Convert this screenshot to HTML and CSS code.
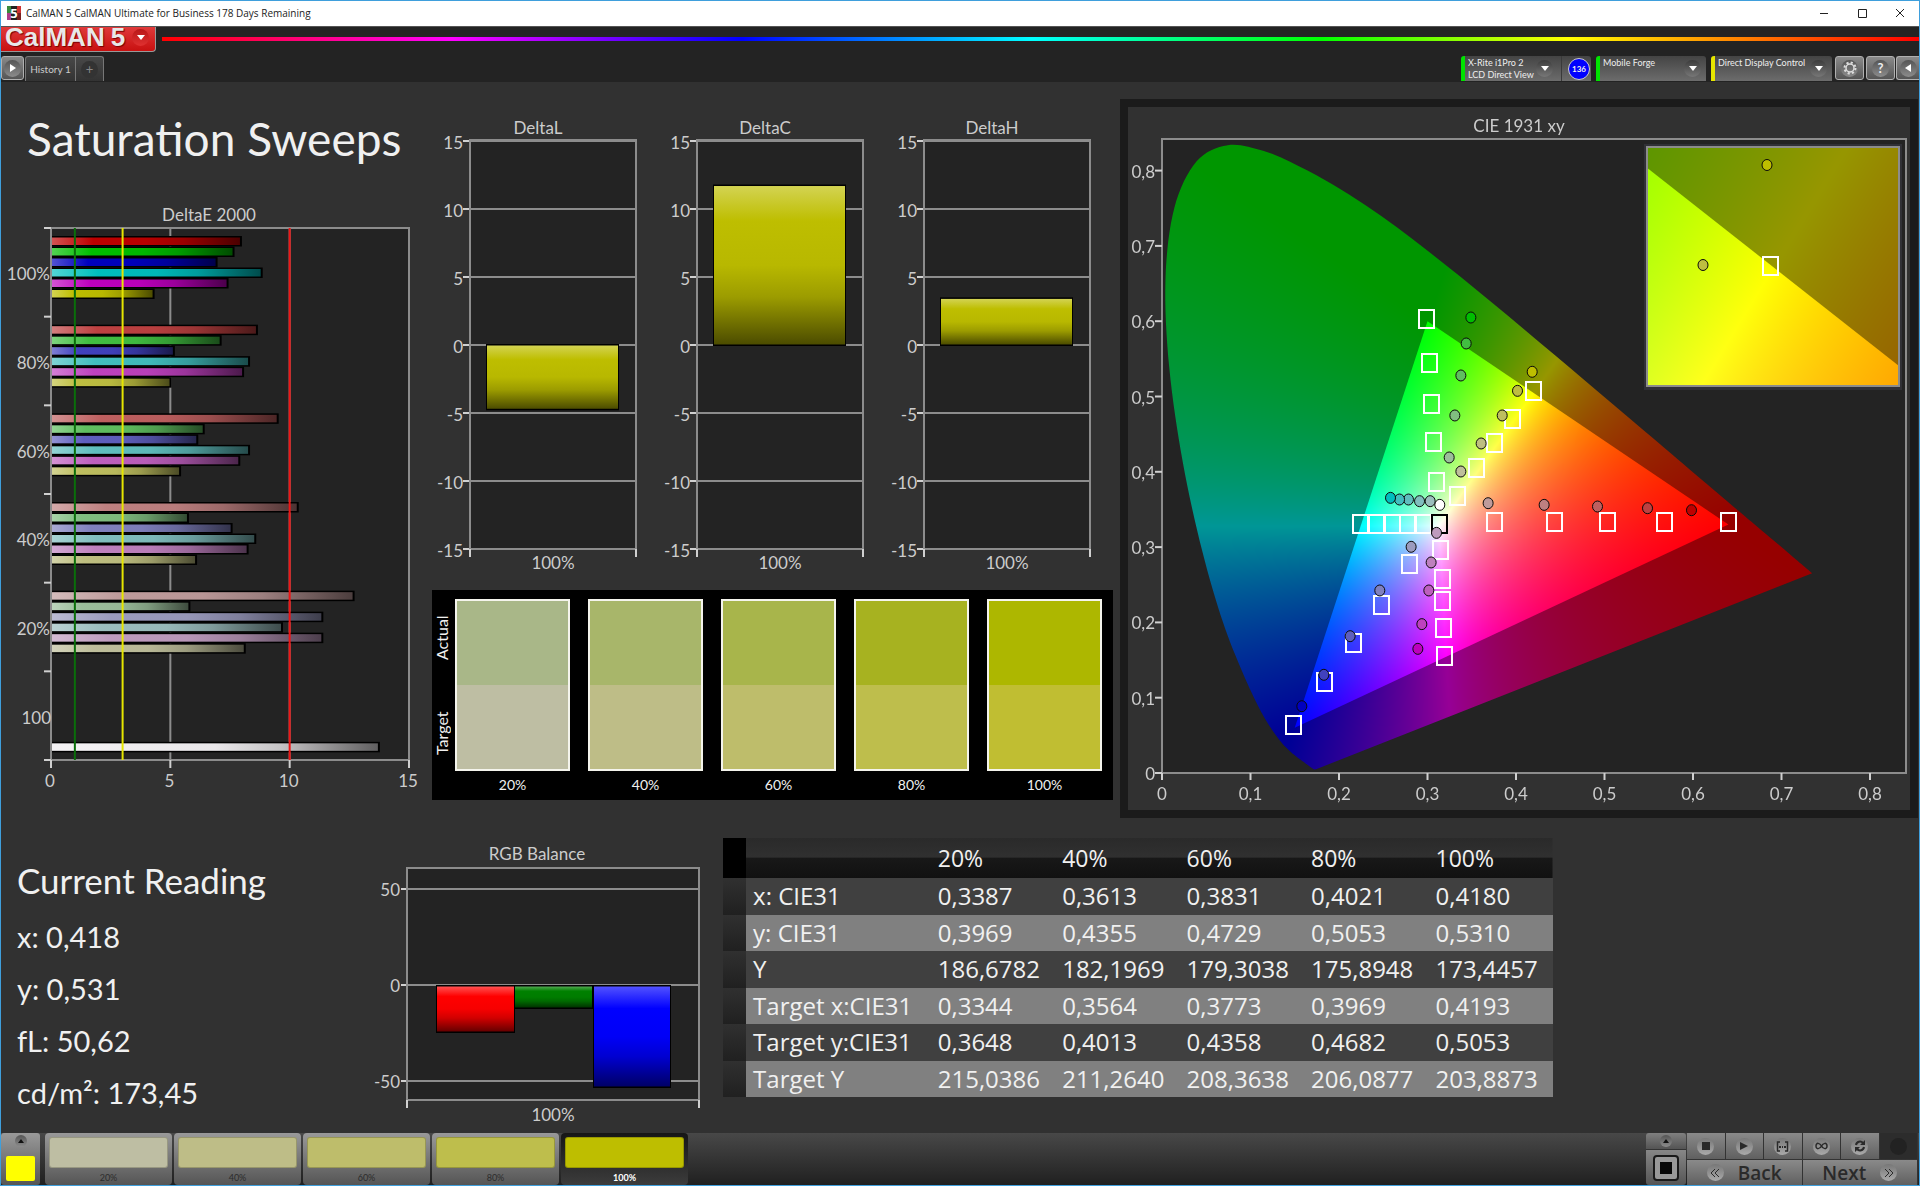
FILE: index.html
```html
<!DOCTYPE html>
<html lang="en">
<head>
    <meta charset="UTF-8">
    <meta name="viewport" content="width=device-width, initial-scale=1.0">
    <title>CalMAN 5</title>
    <link rel="stylesheet" href="styles.css">
</head>
<body>
    <div class="titlebar">
        <svg class="app-icon" width="14" height="14" viewBox="0 0 14 14">
            <rect width="14" height="14" fill="#222"/>
            <rect width="4" height="7" fill="#3a8a3a"/>
            <rect y="7" width="4" height="7" fill="#b03a8a"/>
            <rect x="10" width="4" height="7" fill="#c33"/>
            <rect x="10" y="7" width="4" height="7" fill="#7a2020"/>
            <text x="7" y="12" class="icon-five">5</text>
        </svg>
        <span class="window-title">CalMAN 5 CalMAN Ultimate for Business 178 Days Remaining</span>
        <button class="window-button" aria-label="Minimize"><svg width="10" height="10"><path d="M1 5.5h8"/></svg></button>
        <button class="window-button" aria-label="Maximize"><svg width="10" height="10"><path d="M1.5 1.5h8v8h-8z"/></svg></button>
        <button class="window-button" aria-label="Close"><svg width="10" height="10"><path d="M1 1l8 8M9 1l-8 8"/></svg></button>
    </div>

    <div class="header">
        <div class="brand">
            <button class="logo" aria-label="CalMAN menu">
                <span class="logo-name">CalMAN</span><span class="logo-name">5</span>
                <span class="round round-red"><svg width="8" height="5"><path d="M0 0h8l-4 5z" fill="#fff"/></svg></span>
            </button>
            <div class="rainbow"></div>
        </div>
        <div class="toolbar">
            <button class="tool" aria-label="Show panel"><span class="round"><svg width="6" height="8"><path d="M0 0v8l6-4z" fill="#fff"/></svg></span></button>
            <div class="tabs">
                <button class="tab">History 1</button>
                <button class="tab tab-add" aria-label="Add tab"><span class="round round-dim">+</span></button>
            </div>
            <div class="spacer"></div>
            <div class="device meter">
                <button class="device-main">
                    <span class="device-name">X-Rite i1Pro 2<br>LCD Direct View</span>
                    <span class="round round-dark"><svg width="8" height="5"><path d="M0 0h8l-4 5z" fill="#fff"/></svg></span>
                </button>
                <span class="badge">136</span>
            </div>
            <div class="device source">
                <button class="device-main">
                    <span class="device-name">Mobile Forge</span>
                    <span class="round round-dark"><svg width="8" height="5"><path d="M0 0h8l-4 5z" fill="#fff"/></svg></span>
                </button>
            </div>
            <div class="device display">
                <button class="device-main">
                    <span class="device-name">Direct Display Control</span>
                    <span class="round round-dark"><svg width="8" height="5"><path d="M0 0h8l-4 5z" fill="#fff"/></svg></span>
                </button>
            </div>
            <button class="tool tool-wide" aria-label="Settings"><span class="round"><svg width="14" height="14" viewBox="-7 -7 14 14"><circle r="5.5" fill="none" stroke="#ddd" stroke-width="2" stroke-dasharray="2.16 2.16"/><circle r="4" fill="none" stroke="#ddd" stroke-width="1.5"/></svg></span></button>
            <button class="tool tool-wide" aria-label="Help"><span class="round">?</span></button>
            <button class="tool tool-last" aria-label="Hide panel"><span class="round"><svg width="6" height="8"><path d="M6 0v8l-6-4z" fill="#fff"/></svg></span></button>
        </div>
    </div>

    <div class="main">
        <div class="top">
            <div class="sweeps">
                <h1>Saturation Sweeps</h1>
                <svg id="deltaE" viewBox="0 0 429 620"></svg>
            </div>

            <div class="middle">
                <div class="deltas">
                    <svg id="deltaL" viewBox="0 0 227 480"></svg>
                    <svg id="deltaC" viewBox="0 0 227 480"></svg>
                    <svg id="deltaH" viewBox="0 0 227 480"></svg>
                </div>
                <div class="compare">
                    <div class="compare-side"><span>Actual</span><span>Target</span></div>
                    <div class="patch"><div class="colors p20"><i></i><i></i></div>20%</div>
                    <div class="patch"><div class="colors p40"><i></i><i></i></div>40%</div>
                    <div class="patch"><div class="colors p60"><i></i><i></i></div>60%</div>
                    <div class="patch"><div class="colors p80"><i></i><i></i></div>80%</div>
                    <div class="patch"><div class="colors p100"><i></i><i></i></div>100%</div>
                </div>
            </div>

            <div class="cie">
                <svg viewBox="0 0 782 703">
                    <rect x="34" y="32" width="744" height="634" fill="#232323"/>
                    <foreignObject x="34" y="32" width="744" height="634"><canvas id="gamut" width="744" height="634"></canvas></foreignObject>
                    <rect x="516" y="37" width="258" height="246" fill="#303036"/>
                    <foreignObject x="519" y="40" width="252" height="239"><canvas id="gamutZoom" width="252" height="239"></canvas></foreignObject>
                    <g id="cieMarks"></g>
                </svg>
            </div>
        </div>

        <div class="bottom">
            <div class="reading">
                <h2>Current Reading</h2>
                <p>x: 0,418</p>
                <p>y: 0,531</p>
                <p>fL: 50,62</p>
                <p>cd/m²: 173,45</p>
            </div>
            <svg id="balance" viewBox="0 0 352 297"></svg>
            <table class="results">
                <thead>
                    <tr><td class="grip"></td><th></th><th>20%</th><th>40%</th><th>60%</th><th>80%</th><th>100%</th></tr>
                </thead>
                <tbody>
                    <tr><td class="grip"></td><th>x: CIE31</th><td>0,3387</td><td>0,3613</td><td>0,3831</td><td>0,4021</td><td>0,4180</td></tr>
                    <tr><td class="grip"></td><th>y: CIE31</th><td>0,3969</td><td>0,4355</td><td>0,4729</td><td>0,5053</td><td>0,5310</td></tr>
                    <tr><td class="grip"></td><th>Y</th><td>186,6782</td><td>182,1969</td><td>179,3038</td><td>175,8948</td><td>173,4457</td></tr>
                    <tr><td class="grip"></td><th>Target x:CIE31</th><td>0,3344</td><td>0,3564</td><td>0,3773</td><td>0,3969</td><td>0,4193</td></tr>
                    <tr><td class="grip"></td><th>Target y:CIE31</th><td>0,3648</td><td>0,4013</td><td>0,4358</td><td>0,4682</td><td>0,5053</td></tr>
                    <tr><td class="grip"></td><th>Target Y</th><td>215,0386</td><td>211,2640</td><td>208,3638</td><td>206,0877</td><td>203,8873</td></tr>
                </tbody>
            </table>
        </div>
    </div>

    <div class="footer">
        <button class="current" aria-label="Current color">
            <span class="round round-small"><svg width="6" height="4"><path d="M0 4h6l-3-4z" fill="#111"/></svg></span>
            <span class="current-color"></span>
        </button>
        <div class="levels">
            <button class="level l20"><i></i>20%</button>
            <button class="level l40"><i></i>40%</button>
            <button class="level l60"><i></i>60%</button>
            <button class="level l80"><i></i>80%</button>
            <button class="level l100 selected"><i></i>100%</button>
        </div>
        <div class="spacer"></div>
        <div class="pattern">
            <button class="pattern-up" aria-label="Patterns"><span class="round round-small"><svg width="6" height="4"><path d="M0 4h6l-3-4z" fill="#111"/></svg></span></button>
            <button class="pattern-window" aria-label="Window pattern">
                <svg width="26" height="26"><rect x="1" y="1" width="24" height="24" rx="3" fill="#999" stroke="#1a1a1a" stroke-width="2"/><rect x="7" y="7" width="12" height="12" fill="#080808"/></svg>
            </button>
        </div>
        <div class="transport">
            <button aria-label="Stop"><span class="knob"><svg width="8" height="8"><path d="M0 0h8v8h-8z"/></svg></span></button>
            <button aria-label="Play"><span class="knob"><svg width="8" height="10"><path d="M0 1v8l8-4z"/></svg></span></button>
            <button aria-label="Read series"><span class="knob"><svg width="13" height="11"><path d="M4 1H1.5v9H4M9 1h2.5v9H9" fill="none" stroke="#2a2a2a" stroke-width="1.5"/><path d="M3 5h2v2H3zM6 5h1v2H6zM8 5h2v2H8z"/></svg></span></button>
            <button aria-label="Continuous"><span class="knob"><svg width="13" height="8"><path d="M6.5 4C5 1 1 0 1 4s4 3 5.5 0S12 0 12 4s-4 3-5.5 0z" fill="none" stroke="#2a2a2a" stroke-width="1.5"/></svg></span></button>
            <button aria-label="Refresh"><span class="knob"><svg width="12" height="12"><path d="M2 5a4 4 0 0 1 7-2M10 7a4 4 0 0 1-7 2" fill="none" stroke="#2a2a2a" stroke-width="2"/><path d="M11 0v5H6zM1 12V7h5z"/></svg></span></button>
            <button class="off" aria-label="Not available" disabled><span class="knob"></span></button>
            <button class="nav"><span class="knob"><svg width="10" height="10"><path d="M5 1L1 5l4 4M9 1L5 5l4 4" fill="none" stroke="#2a2a2a"/></svg></span>Back</button>
            <button class="nav">Next<span class="knob"><svg width="10" height="10"><path d="M1 1l4 4-4 4M5 1l4 4-4 4" fill="none" stroke="#2a2a2a"/></svg></span></button>
        </div>
    </div>

    <script src="script.js"></script>
</body>
</html>
```
FILE: styles.css
```css
* {
    box-sizing: border-box;
}
body {
    display: flex;
    flex-direction: column;
    min-height: 100vh;
    margin: 0;
    border: 1px solid #3f9fdc;
    background-color: #313131;
    color: #f0f0f0;
    font-family: Lato, "Liberation Sans", sans-serif;
}
button {
    margin: 0;
    padding: 0;
    border: none;
    background: none;
    color: inherit;
    font-family: inherit;
    cursor: pointer;
}
svg {
    display: block;
}
.spacer {
    flex: 1;
}

/* window frame */
.titlebar {
    display: flex;
    align-items: center;
    height: 25px;
    padding: 0 0 1px 6px;
    background-color: #fff;
    color: #222;
    font-family: "Open Sans", sans-serif;
    font-size: 10px;
}
.window-title {
    flex: 1;
    padding-left: 5px;
}
.window-button {
    display: flex;
    justify-content: center;
    width: 38px;
}
.window-button path {
    fill: none;
    stroke: #222;
}

/* brand and toolbar */
.header {
    height: 56px;
    background-color: #232323;
    border-top: 1px solid #555;
}
.brand {
    display: flex;
    height: 25px;
}
.logo {
    display: flex;
    align-items: center;
    gap: 6px;
    width: 155px;
    padding: 0 4px 4px 4px;
    border: 1px solid #999;
    border-top: none;
    border-left: none;
    border-radius: 0 0 4px 0;
    background: linear-gradient(#e03a3a, #c81010);
}
.logo-name {
    color: #e8e8e8;
    font-family: "Liberation Sans", sans-serif;
    font-size: 26px;
    line-height: 20px;
    font-weight: bold;
    text-shadow: 1px 1px 1px #700;
}
.rainbow {
    flex: 1;
    height: 4px;
    margin: 10px 0 0 6px;
    background: linear-gradient(to right, red, magenta, blue, cyan, lime 66%, yellow 80%, red);
}
.toolbar {
    display: flex;
    height: 25px;
    margin-top: 4px;
}
.round {
    display: flex;
    flex: none;
    align-items: center;
    justify-content: center;
    width: 17px;
    height: 17px;
    border-radius: 50%;
    background: linear-gradient(#555, #8c8c8c);
    color: #eee;
    font-size: 13px;
    font-weight: bold;
}
.round-red {
    margin-left: auto;
    margin-right: 2px;
    background: linear-gradient(#b81818, #e03030);
}
.round-dim {
    background: #333;
    color: #888;
    font-weight: normal;
}
.round-dark {
    background: linear-gradient(#3c3c3c, #777);
}
.round-small {
    width: 12px;
    height: 12px;
    background: linear-gradient(#555, #8c8c8c);
}
.tool {
    display: flex;
    align-items: center;
    justify-content: center;
    width: 23px;
    height: 24px;
    border: 1px solid #b0b0b0;
    border-radius: 3px;
    background: linear-gradient(#8a8a8a, #555);
}
.tool-wide {
    width: 29px;
    margin-left: 2px;
}
.tool-last {
    margin-left: 1px;
    border-right: none;
    border-radius: 3px 0 0 3px;
}
.tabs {
    display: flex;
    margin-left: 1px;
    border: 1px solid #777;
    border-bottom: none;
    border-radius: 3px 3px 0 0;
    background: linear-gradient(#484848, #333);
}
.tab {
    width: 49px;
    color: #ccc;
    font-size: 10px;
}
.tab-add {
    display: flex;
    align-items: center;
    justify-content: center;
    width: 28px;
    border-left: 1px solid #777;
}
.device {
    display: flex;
    align-items: center;
    margin-right: 5px;
    border-left: 4px solid #00e400;
    border-radius: 3px 3px 0 0;
    background: linear-gradient(#444, #6c6c6c);
}
.meter {
    width: 130px;
}
.source {
    width: 110px;
}
.display {
    width: 121px;
    margin-right: 1px;
    border-left-color: #e6e600;
}
.device-main {
    display: flex;
    flex: 1;
    align-items: center;
    justify-content: space-between;
    height: 25px;
    padding: 0 5px 0 3px;
    color: #eee;
    font-size: 9px;
    line-height: 12px;
    text-align: left;
}
.device-name {
    align-self: flex-start;
    padding-top: 1px;
    white-space: nowrap;
}
.meter .device-main {
    padding-right: 8px;
    border-right: 1px solid #3a3a3a;
}
.badge {
    width: 22px;
    height: 22px;
    margin: 0 1px 0 6px;
    border: 1px solid #ccc;
    border-radius: 50%;
    background-color: #00f;
    font-size: 8px;
    line-height: 20px;
    font-weight: bold;
    text-align: center;
}

/* charts */
.main {
    flex: 1;
    display: flex;
    flex-direction: column;
}
.top {
    display: grid;
    grid-template-columns: 429fr 690fr 799fr;
}
.sweeps h1 {
    margin: 27px 0 0 26px;
    height: 91px;
    font-size: 46px;
    line-height: 60px;
    font-weight: normal;
    white-space: nowrap;
}
.deltas {
    display: grid;
    grid-template-columns: 227fr 227fr 227fr 9fr;
    padding-top: 28px;
}
.compare {
    display: flex;
    gap: 18px;
    height: 210px;
    margin: 0 7px 0 2px;
    padding: 9px 11px 0 0;
    background-color: #000;
}
.compare-side {
    display: flex;
    flex-direction: row-reverse;
    justify-content: space-around;
    align-items: center;
    width: 20px;
    height: 190px;
    margin: -9px -15px 0 0;
    writing-mode: vertical-rl;
    transform: rotate(180deg);
    font-size: 16px;
    line-height: 20px;
}
.patch {
    flex: 1;
    font-size: 14px;
    line-height: 28px;
    text-align: center;
}
.colors {
    height: 172px;
    border: 2px solid #f4f4ec;
}
.colors i {
    display: block;
    height: 50%;
}
.p20 i:first-child { background-color: #a9b788; }
.p20 i:last-child { background-color: #bebea3; }
.p40 i:first-child { background-color: #a8b66a; }
.p40 i:last-child { background-color: #bebd87; }
.p60 i:first-child { background-color: #a8b54b; }
.p60 i:last-child { background-color: #bebd6b; }
.p80 i:first-child { background-color: #a7b220; }
.p80 i:last-child { background-color: #bebe4c; }
.p100 i:first-child { background-color: #adb700; }
.p100 i:last-child { background-color: #c0be32; }
.cie {
    align-self: start;
    margin: 17px 1px 0 0;
    border: 8px solid #1b1b1b;
}
canvas {
    display: block;
    width: 100%;
    height: 100%;
}
svg text {
    fill: #ccc;
    font-size: 17px;
}
svg .icon-five {
    fill: #fff;
    font-size: 13px;
    font-weight: bold;
    text-anchor: middle;
}
.center { text-anchor: middle; }
.end { text-anchor: end; }
.plot { fill: #232323; }
.frame { fill: none; stroke: #8c8c8c; stroke-width: 2; }
.line { stroke: #8c8c8c; stroke-width: 2; }
.tick { stroke: #d0d0d0; stroke-width: 2; }
.limit-green { stroke: #0a6e0a; stroke-width: 2; }
.limit-yellow { stroke: #e6e600; stroke-width: 2; }
.limit-red { stroke: #f01414; stroke-width: 2; }
.target { fill: none; stroke: #fff; stroke-width: 2; }
.white-target { fill: none; stroke: #000; stroke-width: 2; }
.actual { stroke: #0a0a0a; stroke-width: 1; }

/* reading and table */
.bottom {
    display: grid;
    grid-template-columns: 362fr 352fr 1204fr;
    align-items: start;
    margin-top: 16px;
}
.reading {
    padding: 19px 0 0 16px;
}
.reading h2 {
    margin: 0;
    font-size: 35px;
    line-height: 50px;
    font-weight: normal;
}
.reading p {
    margin: 0;
    font-size: 29px;
    line-height: 52px;
}
.reading h2 + p {
    margin-top: 6px;
}
.results {
    width: 830px;
    height: 259px;
    margin: 2px 0 0 8px;
    border-collapse: collapse;
    table-layout: fixed;
    font-family: "Open Sans", sans-serif;
    font-size: 24px;
    line-height: 30px;
}
.results th,
.results td {
    width: 124px;
    padding: 0 0 0 7px;
    font-weight: normal;
    text-align: left;
    white-space: nowrap;
}
.results th:nth-child(2) {
    width: 184px;
}
.results .grip {
    width: 23px;
    padding: 0;
    background: linear-gradient(#303030, #202020);
}
.results thead tr {
    height: 40px;
    background: linear-gradient(#2a2a2a, #303030 48%, #181818 50%, #111);
    font-size: 23px;
}
.results thead .grip {
    background: #000;
}
.results tbody tr {
    background-color: #404040;
}
.results tbody tr:nth-child(even) {
    background-color: #808080;
}

/* footer */
.footer {
    display: flex;
    height: 52px;
    background: linear-gradient(#484848, #202020);
}
.current {
    display: flex;
    flex-direction: column;
    align-items: center;
    justify-content: space-between;
    width: 39px;
    padding: 2px 0 4px;
    border-radius: 3px;
    background: linear-gradient(#999, #555);
}
.current-color {
    width: 29px;
    height: 25px;
    border-radius: 2px;
    background-color: #ff0;
}
.levels {
    display: flex;
    gap: 2px;
    margin-left: 5px;
}
.level {
    width: 127px;
    padding: 4px 4px 0;
    border-radius: 4px;
    background: linear-gradient(#999, #555);
    color: #2c2c2c;
    font-size: 9px;
    line-height: 16px;
}
.level i {
    display: block;
    height: 31px;
    margin-bottom: 2px;
    border: 1px solid #0003;
    border-radius: 3px;
}
.l20 i { background-color: #bebea3; }
.l40 i { background-color: #bebd87; }
.l60 i { background-color: #bebd6b; }
.l80 i { background-color: #bebe4c; }
.l100 i { background-color: #bebe00; }
.level.selected {
    background: linear-gradient(#161616, #3c3c3c);
    color: #fff;
    font-weight: bold;
}
.pattern {
    display: flex;
    flex-direction: column;
    width: 40px;
    margin-right: 1px;
    border-radius: 3px;
    background: linear-gradient(#808080, #555 30%, #888 31%, #555);
}
.pattern button {
    display: flex;
    align-items: center;
    justify-content: center;
}
.pattern-up {
    height: 16px;
}
.pattern-window {
    flex: 1;
    border-top: 1px solid #333;
}
.transport {
    display: grid;
    grid-template-columns: repeat(6, 1fr);
    grid-template-rows: 26px 25px;
    gap: 1px 0;
    width: 231px;
    margin-right: 1px;
}
.transport button {
    display: flex;
    align-items: center;
    justify-content: center;
    border-right: 1px solid #333;
    background: linear-gradient(#8a8a8a, #606060);
}
.transport .off {
    background: #2c2c2c;
}
.transport .nav {
    grid-column: span 3;
    gap: 14px;
    color: #2a2a2a;
    font-family: "Open Sans", sans-serif;
    font-size: 19px;
    line-height: 24px;
    font-weight: 600;
}
.knob {
    display: flex;
    align-items: center;
    justify-content: center;
    width: 17px;
    height: 17px;
    border-radius: 50%;
    background: linear-gradient(#777, #aaa);
}
.off .knob {
    background: #222;
}
.knob path {
    fill: #2a2a2a;
}
.knob path[fill="none"] {
    fill: none;
}
```
FILE: script.js
```js
const levels = [100, 80, 60, 40, 20];
const lows = { 100: 0, 80: 65, 60: 95, 40: 128, 20: 155 };
const hues = { red: '100', green: '010', blue: '001', cyan: '011', magenta: '101', yellow: '110' };

// Base colour of a hue at a saturation level
function shade(hue, level) {
    return [...hues[hue]].map(c => c === '1' ? 190 : lows[level]);
}

function mix(rgb, to, amount) {
    return 'rgb(' + rgb.map(c => Math.round(c + (to - c) * amount)).join(',') + ')';
}

function line(cls, x1, y1, x2, y2) {
    return `<line class="${cls}" x1="${x1}" y1="${y1}" x2="${x2}" y2="${y2}"/>`;
}

function text(cls, x, y, value) {
    return `<text class="${cls}" x="${x}" y="${y}">${value}</text>`;
}

let gradientCount = 0;
function bar(x, y, w, h, rgb, vertical) {
    const id = 'g' + gradientCount++;
    const end = vertical ? 'x2="0" y2="1"' : 'x2="1" y2="0"';
    return `<linearGradient id="${id}" ${end}>
        <stop offset="0" stop-color="${mix(rgb, 255, 0.32)}"/>
        <stop offset="0.22" stop-color="${mix(rgb, 0, 0)}"/>
        <stop offset="0.5" stop-color="${mix(rgb, 0, 0.03)}"/>
        <stop offset="0.7" stop-color="${mix(rgb, 0, 0.18)}"/>
        <stop offset="1" stop-color="${mix(rgb, 0, 0.6)}"/></linearGradient>
        <rect x="${x}" y="${y}" width="${w}" height="${h}" fill="#000"/>
        <rect x="${x + (vertical ? 1 : 0)}" y="${y + 1.5}" width="${w - 2}" height="${h - 3}" fill="url(#${id})"/>`;
}

// DeltaE 2000
const deltaE = {
    100: [8.00, 7.69, 6.98, 8.87, 7.44, 4.34],
    80: [8.67, 7.15, 5.19, 8.34, 8.09, 5.05],
    60: [9.54, 6.44, 6.17, 8.34, 7.93, 5.45],
    40: [10.38, 5.78, 7.61, 8.60, 8.28, 6.12],
    20: [12.72, 5.84, 11.41, 9.72, 11.41, 8.16]
};

function drawDeltaE() {
    const left = 50, right = 408, top = 28, bottom = 560;
    const unit = (right - left) / 15;
    const group = (bottom - top) / 6;
    let out = `<rect class="plot" x="${left}" y="${top}" width="${right - left}" height="${bottom - top}"/>`;
    out += text('center', 208, 21, 'DeltaE 2000');
    out += line('line', left + 5 * unit, top, left + 5 * unit, bottom);
    out += line('line', left + 10 * unit, top, left + 10 * unit, bottom);
    out += `<rect class="frame" x="${left}" y="${top}" width="${right - left}" height="${bottom - top}"/>`;
    levels.forEach((level, i) => {
        Object.keys(hues).forEach((hue, j) => {
            const y = top + i * group + 8 + j * 10.5;
            out += bar(left + 1, y, deltaE[level][j] * unit - 1, 10.5, shade(hue, level), false);
        });
        out += text('end', left - 1, top + (i + 0.5) * group + 8, level + '%');
    });
    out += bar(left + 1, top + 5 * group + 70.5, 13.78 * unit - 1, 10.5, [240, 238, 240], false);
    out += text('end', left, top + 5.5 * group + 8, '100');
    for (let i = 0; i <= 6; i++) {
        out += line('tick', left - 7, top + i * group, left, top + i * group);
    }
    for (let v = 0; v <= 15; v += 5) {
        out += line('tick', left + v * unit, bottom, left + v * unit, bottom + 8);
        out += text('center', left + v * unit - 1, bottom + 27, v);
    }
    out += line('limit-green', left + unit, top, left + unit, bottom);
    out += line('limit-yellow', left + 3 * unit, top, left + 3 * unit, bottom);
    out += line('limit-red', left + 10 * unit, top, left + 10 * unit, bottom);
    document.getElementById('deltaE').innerHTML = out;
}

// DeltaL, DeltaC and DeltaH
function drawDelta(name, value) {
    const left = 40, right = 206, top = 30, bottom = 439, zero = 235;
    const unit = 13.6;
    let out = `<rect class="plot" x="${left}" y="${top}" width="${right - left}" height="${bottom - top}"/>`;
    out += text('center', 108, 24, name);
    for (let v = -15; v <= 15; v += 5) {
        const y = zero - v * unit;
        out += line('line', left, y, right, y) + line('tick', left - 7, y, left, y);
        out += text('end', left - 7, y + 8, v);
    }
    out += `<rect class="frame" x="${left}" y="${top}" width="${right - left}" height="${bottom - top}"/>`;
    out += line('tick', left, bottom, left, bottom + 8) + line('tick', right, bottom, right, bottom + 8);
    out += bar(56, value > 0 ? zero - value * unit : zero - 1, 133, Math.abs(value) * unit + 1, [190, 190, 0], true);
    out += text('center', 123, bottom + 20, '100%');
    document.getElementById(name.replace('D', 'd')).innerHTML = out;
}

function drawBalance() {
    const left = 44, right = 336, top = 32, bottom = 264, zero = 149;
    let out = `<rect class="plot" x="${left}" y="${top}" width="${right - left}" height="${bottom - top}"/>`;
    out += text('center', 174, 24, 'RGB Balance');
    [50, 0, -50].forEach(v => {
        const y = zero - v * 1.92;
        out += line('line', left, y, right, y) + line('tick', left - 6, y, left, y);
        out += text('end', left - 7, y + 7, v);
    });
    out += `<rect class="frame" x="${left}" y="${top}" width="${right - left}" height="${bottom - top}"/>`;
    out += line('tick', left, bottom, left, bottom + 8) + line('tick', right, bottom, right, bottom + 8);
    out += bar(73, zero, 79, 48, [255, 0, 0], true);
    out += bar(151, zero, 79, 24, [0, 128, 0], true);
    out += bar(230, zero, 78, 103, [0, 0, 255], true);
    out += text('center', 190, bottom + 21, '100%');
    document.getElementById('balance').innerHTML = out;
}

// Spectral locus, x and y
const locus = [
    [.1741, .0050], [.1733, .0048], [.1714, .0051], [.1689, .0069], [.1644, .0109], [.1566, .0177], [.1510, .0227],
    [.1440, .0297], [.1355, .0399], [.1241, .0578], [.1096, .0868], [.0913, .1327], [.0687, .2007], [.0454, .2950],
    [.0235, .4127], [.0082, .5384], [.0039, .6548], [.0139, .7502], [.0389, .8120], [.0743, .8338], [.1142, .8262],
    [.1547, .8059], [.1929, .7816], [.2296, .7543], [.2658, .7243], [.3016, .6923], [.3373, .6589], [.3731, .6245],
    [.4087, .5896], [.4441, .5547], [.4788, .5202], [.5125, .4866], [.5448, .4544], [.5752, .4242], [.6029, .3965],
    [.6270, .3725], [.6482, .3514], [.6658, .3340], [.6915, .3083], [.7140, .2859], [.7260, .2740], [.7347, .2653]
];
const triangle = [[.64, .33], [.30, .60], [.15, .06]];

// Brightest colour of a chromaticity, clipped to the triangle
function xyToRgb(x, y) {
    const X = x / y, Z = (1 - x - y) / y;
    const rgb = [
        3.2406 * X - 1.5372 - 0.4986 * Z,
        -0.9689 * X + 1.8758 + 0.0415 * Z,
        0.0557 * X - 0.2040 + 1.0570 * Z
    ].map(c => Math.max(c, 0));
    const max = Math.max(...rgb);
    return rgb.map(c => 255 * c / max);
}

function fillGamut(id, x0, x1, y0, y1) {
    const canvas = document.getElementById(id);
    const ctx = canvas.getContext('2d');
    const w = canvas.width, h = canvas.height;

    function layer(brightness) {
        const off = document.createElement('canvas');
        off.width = w;
        off.height = h;
        const offCtx = off.getContext('2d');
        const img = offCtx.createImageData(w, h);
        for (let py = 0; py < h; py++) {
            for (let px = 0; px < w; px++) {
                const rgb = xyToRgb(x0 + (x1 - x0) * px / w, Math.max(y1 - (y1 - y0) * py / h, 0.001));
                const i = (py * w + px) * 4;
                for (let c = 0; c < 3; c++) img.data[i + c] = rgb[c] * brightness;
                img.data[i + 3] = 255;
            }
        }
        offCtx.putImageData(img, 0, 0);
        return off;
    }

    function at(p) {
        return [(p[0] - x0) / (x1 - x0) * w, (y1 - p[1]) / (y1 - y0) * h];
    }

    function paint(path, image) {
        ctx.save();
        ctx.beginPath();
        path();
        ctx.clip();
        ctx.drawImage(image, 0, 0);
        ctx.restore();
    }

    paint(() => {
        // Smooth curve that passes through every point of the locus
        const p = locus.map(at);
        ctx.moveTo(...p[0]);
        for (let i = 0; i < p.length - 1; i++) {
            const a = p[Math.max(i - 1, 0)], b = p[i], c = p[i + 1], d = p[Math.min(i + 2, p.length - 1)];
            ctx.bezierCurveTo(
                b[0] + (c[0] - a[0]) / 6, b[1] + (c[1] - a[1]) / 6,
                c[0] - (d[0] - b[0]) / 6, c[1] - (d[1] - b[1]) / 6,
                c[0], c[1]
            );
        }
        ctx.closePath();
    }, layer(0.59));
    paint(() => {
        triangle.map(at).forEach(p => ctx.lineTo(...p));
        ctx.closePath();
    }, layer(1));
}

// Points from 100% down to 20%
const targets = [
    [.2993, .6023], [.3030, .5443], [.3049, .4907], [.3079, .4398], [.3102, .3862],
    [.4198, .5071], [.3968, .4699], [.3768, .4376], [.3561, .4048], [.3347, .3676],
    [.6405, .3331], [.5682, .3331], [.5045, .3331], [.4446, .3327], [.3768, .3327],
    [.2254, .3305], [.2431, .3305], [.2608, .3305], [.2778, .3305], [.2959, .3305],
    [.3203, .1560], [.3188, .1932], [.3173, .2282], [.3173, .2583], [.3151, .2959],
    [.1490, .0635], [.1844, .1215], [.2164, .1724], [.2484, .2233], [.2800, .2773]
];
const actuals = {
    green: [[.3490, .6049], [.3437, .5704], [.3377, .5279], [.3309, .4748], [.3245, .4190]],
    yellow: [[.4183, .5328], [.4017, .5075], [.3844, .4748], [.3606, .4376], [.3377, .4004]],
    red: [[.5983, .3490], [.5486, .3517], [.4921, .3539], [.4318, .3561], [.3685, .3583]],
    cyan: [[.2582, .3654], [.2684, .3632], [.2785, .3632], [.2910, .3610], [.3030, .3610]],
    magenta: [[.2891, .1649], [.2936, .1977], [.3015, .2424], [.3041, .2796], [.3102, .3189]],
    blue: [[.1580, .0887], [.1829, .1304], [.2126, .1817], [.2461, .2424], [.2815, .3004]]
};

function square(cls, x, y) {
    return `<rect class="${cls}" x="${Math.round(x) - 8}" y="${Math.round(y) - 9}" width="15" height="18"/>`;
}

function dot(x, y, fill) {
    return `<ellipse class="actual" cx="${x}" cy="${y}" rx="5" ry="5.5" fill="${fill}"/>`;
}

function drawCie() {
    const left = 34, right = 778, top = 32, bottom = 666;
    const px = x => left + x * 885;
    const py = y => bottom - y * 753;
    let out = text('center', 391, 25, 'CIE 1931 xy');
    out += `<rect class="frame" x="${left}" y="${top}" width="${right - left}" height="${bottom - top}"/>`;
    for (let i = 0; i <= 8; i++) {
        const label = i ? '0,' + i : '0';
        out += line('tick', px(i / 10), bottom, px(i / 10), bottom + 7) + text('center', px(i / 10), bottom + 27, label);
        out += line('tick', left - 7, py(i / 10), left, py(i / 10)) + text('end', left - 7, py(i / 10) + 7, label);
    }
    targets.forEach(p => out += square('target', px(p[0]), py(p[1])));
    out += square('white-target', px(.3136), py(.3305));
    out += dot(px(.3139), py(.3561), '#fff');
    for (const hue in actuals) {
        for (let i = 4; i >= 0; i--) {
            const p = actuals[hue][i];
            out += dot(px(p[0]), py(p[1]), mix(shade(hue, levels[i]), 0, 0));
        }
    }
    out += '<rect class="frame" x="519" y="40" width="252" height="239"/>';
    out += square('target', 643, 159);
    out += dot(639, 58, '#bebe00') + dot(575, 158, '#bebe41');
    document.getElementById('cieMarks').innerHTML = out;
}

drawDeltaE();
drawDelta('DeltaL', -4.8);
drawDelta('DeltaC', 11.8);
drawDelta('DeltaH', 3.5);
drawBalance();
fillGamut('gamut', 0, 744 / 885, 0, 634 / 753);
fillGamut('gamutZoom', .3873, .4513, .4747, .5360);
drawCie();
```
